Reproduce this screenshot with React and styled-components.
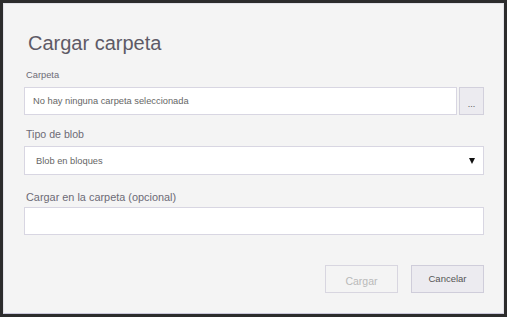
import React from 'react'
import styled, { createGlobalStyle } from 'styled-components'

const GlobalStyle = createGlobalStyle`
    html, body {
        margin: 0;
        padding: 0;
        background: #2b2b2b;
    }
    body {
        font-family: "Liberation Sans", Arial, sans-serif;
    }
`

const Backdrop = styled.div`
    width: 507px;
    height: 317px;
    padding: 3px 3px 3px 3px;
    box-sizing: border-box;
    background: #2c2c2c;
`

const Panel = styled.div`
    box-sizing: border-box;
    width: 501px;
    height: 311px;
    background: #f4f4f4;
    border: 1px solid #e2e2e8;
    border-bottom-color: #c9c7da;
    padding: 27px 19px 0 20px;
    display: flex;
    flex-direction: column;
`

const Title = styled.h1`
    margin: 0 0 0 4px;
    font-size: 20px;
    line-height: 24px;
    font-weight: 400;
    color: #5e5a66;
`

const Label = styled.label`
    display: block;
    margin: ${p => p.$top}px 0 ${p => p.$bottom}px 2px;
    font-size: ${p => p.$size}px;
    line-height: ${p => p.$line}px;
    color: #6d6b76;
`

const Row = styled.div`
    display: flex;
    gap: 2px;
`

const Field = styled.div`
    box-sizing: border-box;
    flex: ${p => (p.$grow ? '1 1 auto' : 'none')};
    height: ${p => p.$height || 28}px;
    background: #fff;
    border: 1px solid #d8d6e2;
    display: flex;
    align-items: center;
    justify-content: space-between;
    padding: 0 8px 0 ${p => p.$pad || 8}px;
    font-size: 9.3px;
    color: #666;
`

const BrowseButton = styled.button`
    box-sizing: border-box;
    width: 25px;
    height: 28px;
    padding: 6px 0 0;
    background: #ecebf0;
    border: 1px solid #d2d0dc;
    font-family: inherit;
    font-size: 9px;
    color: #555;
    display: flex;
    align-items: center;
    justify-content: center;
`

const Footer = styled.div`
    display: flex;
    justify-content: flex-end;
    gap: 13px;
    margin-top: 30px;
`

const Button = styled.button`
    box-sizing: border-box;
    width: 73px;
    height: 28px;
    padding: 0;
    font-family: inherit;
    background: ${p => (p.disabled ? 'transparent' : '#ecebf0')};
    border: 1px solid ${p => (p.disabled ? '#d8d6e0' : '#cfcdda')};
    color: ${p => (p.disabled ? '#b9b9b9' : '#555')};
    font-size: ${p => (p.disabled ? 10.5 : 9.5)}px;
    line-height: ${p => (p.disabled ? 30 : 24)}px;
`

const Arrow = () => (
    <svg width="6" height="6" viewBox="0 0 6 6">
        <polygon points="0,0 6,0 3,6" fill="#111" />
    </svg>
)

export default function App() {
    return (
        <>
            <GlobalStyle />
            <Backdrop>
                <Panel>
                    <Title>Cargar carpeta</Title>

                    <Label $top={14} $bottom={6} $size={9.3} $line={12}>Carpeta</Label>
                    <Row>
                        <Field $grow>No hay ninguna carpeta seleccionada</Field>
                        <BrowseButton>...</BrowseButton>
                    </Row>

                    <Label $top={12} $bottom={5} $size={10.6} $line={14}>Tipo de blob</Label>
                    <Field $height={29} $pad={11}>
                        <span>Blob en bloques</span>
                        <Arrow />
                    </Field>

                    <Label $top={15} $bottom={3} $size={10.9} $line={14}>Cargar en la carpeta (opcional)</Label>
                    <Field />

                    <Footer>
                        <Button disabled>Cargar</Button>
                        <Button>Cancelar</Button>
                    </Footer>
                </Panel>
            </Backdrop>
        </>
    )
}
